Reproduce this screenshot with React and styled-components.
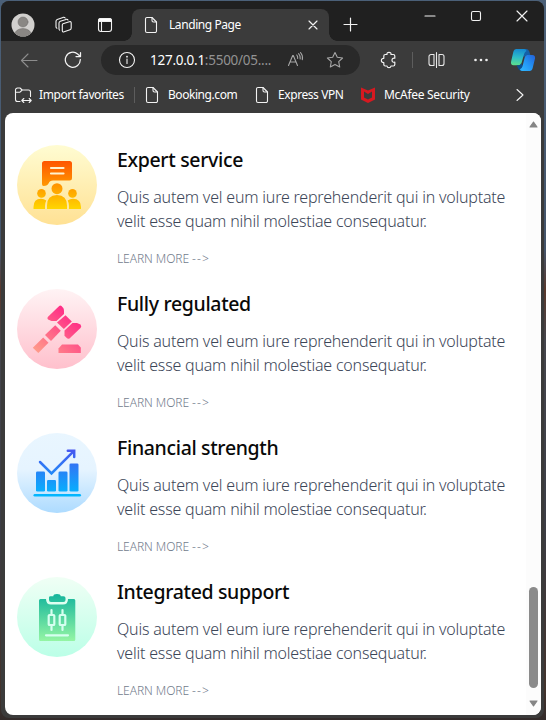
import React from "react";
import styled, { createGlobalStyle } from "styled-components";

const GlobalStyle = createGlobalStyle`
  *, *::before, *::after { box-sizing: border-box; }
  html, body { margin: 0; height: 100%; overflow: hidden; }
  body { font-family: "Noto Sans", "Open Sans", sans-serif; font-variant-ligatures: none; }
  h2, p { margin: 0; }
`;

const Desktop = styled.div`
  width: 546px;
  height: 720px;
  padding: 1px 2px 2px 1px;
  background: linear-gradient(180deg, #4b6078 0, #44546a 250px, #59382c 290px, #45454c 340px, #3c3d45 520px, #43332d 690px, #332b2a 720px);
`;

const Window = styled.div`
  height: 717px;
  display: flex;
  flex-direction: column;
  padding: 0 3px 3px 4px;
  border-radius: 8px;
  background: #3b3b3b;
  overflow: hidden;
`;

const TabStrip = styled.header`
  display: flex;
  flex: none;
  height: 40px;
  margin: 0 -3px 0 -4px;
  background: #202020;
`;

const Slot = styled.span`
  display: flex;
  flex: none;
  align-items: center;
  justify-content: center;
  width: ${(p) => p.$w}px;
  height: ${(p) => p.$h || 30}px;
  margin-left: ${(p) => p.$gap || 0}px;
  margin-top: ${(p) => p.$top || 0}px;
`;

const Tab = styled.div`
  position: relative;
  display: flex;
  align-items: center;
  width: 197px;
  height: 32px;
  margin: 8px 0 0 14px;
  padding: 0 11px 0 12px;
  border-radius: 8px 8px 0 0;
  background: #3b3b3b;
  &::before, &::after {
    content: "";
    position: absolute;
    bottom: 0;
    width: 8px;
    height: 8px;
  }
  &::before { left: -8px; background: radial-gradient(circle at 0 0, #202020 7.5px, #3b3b3b 8px); }
  &::after { right: -8px; background: radial-gradient(circle at 100% 0, #202020 7.5px, #3b3b3b 8px); }
`;

const Label = styled.span`
  flex: none;
  width: ${(p) => p.$w}px;
  margin-left: ${(p) => p.$gap}px;
  color: #fff;
  font-size: 12px;
  line-height: 16px;
  letter-spacing: ${(p) => p.$track ?? -0.42}px;
  white-space: nowrap;
`;

const Toolbar = styled.nav`
  display: flex;
  flex: none;
  align-items: center;
  height: 38px;
  margin: 0 -3px 0 -4px;
`;

const AddressBar = styled.div`
  display: flex;
  align-items: center;
  flex: none;
  width: 259px;
  height: 30px;
  margin-left: 19px;
  border-radius: 15px;
  background: #292929;
`;

const Url = styled.span`
  width: 122px;
  margin-left: 14px;
  font-size: 13.5px;
  line-height: 20px;
  letter-spacing: -0.26px;
  white-space: nowrap;
  color: #929292;
  b { color: #fff; font-weight: 400; }
`;

const Divider = styled.i`
  flex: none;
  width: 1px;
  height: 16px;
  margin-left: ${(p) => p.$gap}px;
  background: #5d5d5d;
`;

const Favorites = styled(Toolbar)`
  height: 34px;
  padding-bottom: 3px;
  padding-left: 13px;
`;

const Viewport = styled.main`
  display: flex;
  flex: 1;
  min-height: 0;
  border-radius: 8px;
  background: #fff;
  overflow: hidden;
`;

const Features = styled.section`
  flex: 1;
  padding: 32px 0 0 12px;
`;

const Feature = styled.article`
  display: flex;
  gap: 20px;
  height: 144px;
`;

const Badge = styled.div`
  flex: none;
  width: 80px;
  height: 80px;
  border-radius: 50%;
  background: linear-gradient(${(p) => p.$tint});
  svg { display: block; }
`;

const Title = styled.h2`
  font-size: 19.5px;
  font-weight: 500;
  line-height: 30px;
  letter-spacing: -0.34px;
  color: #090909;
`;

const Body = styled.p`
  margin-top: 10px;
  font-size: 16px;
  font-weight: 300;
  line-height: 24px;
  letter-spacing: -0.2px;
  white-space: nowrap;
  color: #3c4658;
`;

const More = styled.a`
  display: block;
  margin-top: 17px;
  font-size: 12px;
  font-weight: 300;
  line-height: 18px;
  letter-spacing: -0.07px;
  color: #727c8c;
`;

const Arrow = styled.span`
  letter-spacing: 1.1px;
`;

const Scrollbar = styled.aside`
  display: flex;
  flex-direction: column;
  align-items: center;
  flex: none;
  width: 15px;
  padding: 8px 0 8px;
  background: #fcfcfc;
`;

const Thumb = styled.div`
  width: 9px;
  height: 101px;
  margin: auto 0 12px;
  border-radius: 5px;
  background: #8b8b8b;
`;

const Svg = ({ w, h, children, stroke = "#f2f2f2", sw = 1.1, ...rest }) => (
  <svg width={w} height={h} viewBox={`0 0 ${w} ${h}`} fill="none" stroke={stroke} strokeWidth={sw} strokeLinecap="round" strokeLinejoin="round" {...rest}>
    {children}
  </svg>
);

const Avatar = () => (
  <Svg w={24} h={24} stroke="none">
    <clipPath id="face"><circle cx="12" cy="12" r="11.5" /></clipPath>
    <g clipPath="url(#face)">
      <rect width="24" height="24" fill="#d2d0ce" />
      <circle cx="12" cy="9" r="5" fill="#8a8784" stroke="#6f6c6a" strokeWidth=".5" />
      <ellipse cx="12" cy="21" rx="8" ry="5.5" fill="#8a8784" stroke="#6f6c6a" strokeWidth=".5" />
    </g>
  </Svg>
);

const Workspaces = () => (
  <Svg w={18} h={18}>
    <path d="M8 7.7 14.3 5.8Q16.2 5.2 16.2 7V12Q16.2 13.4 15 13.8L9.2 15.8Q7.3 16.4 7.3 14.6V9Q7.3 8 8 7.7Z" />
    <path d="M4.6 14.1Q4 13.7 4 12.7V7.1Q4 5.8 5.3 5.3L11 3.4Q12.4 3 13 4M1.9 12.2Q1 11.8 1 10.8V5.2Q1 3.9 2.2 3.4L8 1.4Q9.5 1 10.2 2" />
  </Svg>
);

const TabActions = () => (
  <Svg w={16} h={16}>
    <path d="M1.500 4.500V3.500A2 2 0 0 1 3.500 1.500h9A2 2 0 0 1 14.500 3.500V4.500Z" fill="#fff" />
    <rect x="1.500" y="1.500" width="13" height="13" rx="2.500" />
    <path d="M4.500 5v9" />
  </Svg>
);

const Page = () => (
  <Svg w={14} h={18}>
    <path d="M3 1.5h5L12.500 6v9A1.500 1.500 0 0 1 11 16.500H3A1.500 1.500 0 0 1 1.500 15V3A1.500 1.500 0 0 1 3 1.500Z" />
    <path d="M8 1.500V4.500A1.500 1.500 0 0 0 9.500 6h3" />
  </Svg>
);

const Cross = ({ size }) => (
  <Svg w={size} h={size} sw={1.15}><path d={`M1 1 ${size - 1} ${size - 1}M${size - 1} 1 1 ${size - 1}`} /></Svg>
);

const Plus = () => <Svg w={15} h={15} sw={1.2}><path d="M7.500 1v13M1 7.500h13" /></Svg>;

const Back = () => <Svg w={18} h={16} stroke="#8c8c8c"><path d="M17 8.500H1.500M8 2 1.500 8.500 8 15" /></Svg>;

const Refresh = () => (
  <Svg w={18} h={18} sw={1.25}>
    <path d="M16.300 8.500A7.500 7.500 0 1 1 13.600 3L16.500 5.500M16.500 1.500v4h-4.500" />
  </Svg>
);

const Info = () => (
  <Svg w={18} h={18}>
    <circle cx="9" cy="9" r="7.500" />
    <path d="M9 8v4.500" />
    <circle cx="9" cy="5.700" r=".9" fill="#f2f2f2" stroke="none" />
  </Svg>
);

const ReadAloud = () => (
  <Svg w={18} h={18} stroke="#a6a6a6">
    <path d="M1.500 14.500 5.700 4.500h.6L10.500 14.500M3.200 11h5.600" />
    <path d="M9.800 4Q10.900 5.500 10.700 7.500M11.600 2.700Q13.700 5 13.200 8M13.500 1.500Q16.200 4.700 15.300 8.700" />
  </Svg>
);

const Star = () => (
  <Svg w={18} h={18} stroke="#a6a6a6">
    <path d="M9 1.500 11.300 6.300 16.600 7 12.700 10.700 13.700 16 9 13.400 4.300 16 5.300 10.700 1.400 7 6.700 6.300Z" />
  </Svg>
);

const Puzzle = () => (
  <Svg w={18} h={18} sw={1.2}>
    <path d="M5.300 3.500H7C6.700 2 7.500 1.300 9 1.300S11.300 2 11 3.500H13.300A1.500 1.500 0 0 1 14.800 5V7.200C13 6.900 12 7.700 12 9.200S13 11.500 14.800 11.200V13.500A1.500 1.500 0 0 1 13.300 15H11C10.800 16.200 10.200 16.700 9 16.700S7.200 16.200 7 15H5.300A1.500 1.500 0 0 1 3.800 13.500V11.500C2.200 11.600 1.400 10.700 1.400 9.400S2.200 7.200 3.800 7.300V5A1.500 1.500 0 0 1 5.300 3.500Z" />
  </Svg>
);

const Split = () => (
  <Svg w={17} h={18}>
    <path d="M8.500 1.500v15M6 3.500H3A2 2 0 0 0 1 5.500v7A2 2 0 0 0 3 14.500H6V3.500M11 3.500H14A2 2 0 0 1 16 5.500v7A2 2 0 0 1 14 14.500H11V3.500" strokeOpacity=".95" />
  </Svg>
);

const Dots = () => (
  <Svg w={16} h={4} stroke="none">
    {[2.500, 8, 13.500].map((x) => <circle key={x} cx={x} cy="2" r="1.300" fill="#eee" />)}
  </Svg>
);

const Copilot = () => (
  <Svg w={26} h={24} stroke="none">
    <defs>
      <linearGradient id="cpA" x1=".3" y1="0" x2=".2" y2="1"><stop offset="0" stopColor="#168bd0" /><stop offset=".5" stopColor="#2dbcc8" /><stop offset="1" stopColor="#5de08c" /></linearGradient>
      <linearGradient id="cpB" x1="1" y1="0" x2="0" y2="1"><stop offset="0" stopColor="#2460d8" /><stop offset=".5" stopColor="#2394f4" /><stop offset="1" stopColor="#31baff" /></linearGradient>
    </defs>
    <path d="M12 1h4.500q2 0 2.800 2.500L20.500 7.500H16.500q-2 0-2.600 2L12 5Z" fill="#1460a8" />
    <path d="M6.500 1H14q2 0 2.500 2-1.600.4-2.300 2.800L11.500 15q-.6 2.200-2.700 2.200H3.500Q.4 17.200 1.100 13.500L3.300 4Q4 1 6.500 1Z" fill="url(#cpA)" />
    <path d="M6.500 17.200h2.300q1.500 0 2.300-2l1.900 2.500L12 23q-3 0-4-3Z" fill="#0b4f90" />
    <path d="M17.200 7h5Q25.600 7 25 10.500L22.700 20Q22 23 19.500 23H12q-1.700 0-2-1.700 1.800-.5 2.500-3l2.200-8.800Q15.200 7 17.200 7Z" fill="url(#cpB)" />
  </Svg>
);

const ImportFolder = () => (
  <Svg w={18} h={18}>
    <path d="M6 15.500H3.500A2 2 0 0 1 1.500 13.500V4A2 2 0 0 1 3.500 2H6L8.200 4H14.500A2 2 0 0 1 16.500 6v4.500M1.500 6.200H6L8.200 4" />
    <path d="M8 14.500h9M9.800 12.500l-2 2 2 2M15.200 12.500l2 2-2 2" />
  </Svg>
);

const Shield = () => (
  <Svg w={16} h={18} stroke="none">
    <path d="M1 1.500 8 4.500 15 1.500V13.500L8 17 1 13.500Z" fill="#d61920" />
    <path d="M4 5.500 8 8 12 5.500V11.500L8 13.600 4 11.500Z" fill="#3b3b3b" />
  </Svg>
);

const Grad = ({ id, from, to, x1 = 0, y1 = 16, x2 = 0, y2 = 64 }) => (
  <linearGradient id={id} gradientUnits="userSpaceOnUse" x1={x1} y1={y1} x2={x2} y2={y2}>
    <stop offset="0" stopColor={from} />
    <stop offset="1" stopColor={to} />
  </linearGradient>
);

const ExpertArt = () => (
  <Svg w={80} h={80} stroke="none">
    <Grad id="orange" from="#ff5500" to="#ffd600" />
    <g fill="url(#orange)">
      <path d="M27.500 16H52.500Q55 16 55 18.500V33Q55 35.500 52.500 35.500H36Q32.600 35.500 31.800 38 30.700 41 26.500 41Q25 41 25 39V18.500Q25 16 27.500 16Z" />
      <circle cx="40" cy="43.700" r="5.500" />
      <circle cx="24.500" cy="48.400" r="4.300" />
      <circle cx="55.500" cy="48.400" r="4.300" />
      <path d="M30 64V60.500Q30 50 40 50T50 60.500V64ZM16.500 64V62Q16.500 53.800 24 53.800 27 53.800 29.300 55.500 28 58 28 61V64ZM52 64V61Q52 58 50.700 55.500 53 53.800 56 53.800 64 54 64 62V64Z" />
    </g>
    <path d="M34 23h12.500M34 28.500h12.500" stroke="#fff2cf" strokeWidth="2.200" />
  </Svg>
);

const GavelArt = () => (
  <Svg w={80} h={80} stroke="none">
    <Grad id="rose" x1={18} y1={62} x2={52} y2={24} from="#ff9c8a" to="#ff2d86" />
    <g fill="url(#rose)">
      <path d="M30.800 28 42.200 17Q43.300 16 44.500 17L46.300 19Q47 20 47 22V25L39.500 32H34.500L31 30.500Q29.800 29 30.800 28Z" />
      <path d="M48.500 26.200 54.800 32.600 46.800 40 40 33.500Z" />
      <path d="M55.500 34H60L63.500 35.500Q65 37.500 63.500 39L52.500 49.500Q51 50.300 49.500 48.800L47.500 46.800V41.500Z" />
      <path d="M38.200 36.200 43.800 41.800 34 52 28 46Z" />
      <path d="M26.200 48.500 31.500 53.800 21.300 64 15.800 58.700Z" />
      <path d="M45 55.500H61L63.800 58.500V64H41.500V59.500Z" />
    </g>
  </Svg>
);

const ChartArt = () => (
  <Svg w={80} h={80} stroke="none">
    <Grad id="azure" from="#4855ef" to="#00baff" />
    <g fill="url(#azure)">
      <rect x="19" y="38.500" width="9" height="20" rx="1.300" />
      <rect x="30" y="47" width="9" height="11.500" rx="1.300" />
      <rect x="41.500" y="38.500" width="9" height="20" rx="1.300" />
      <rect x="52.500" y="30.500" width="9" height="28" rx="1.300" />
      <rect x="16.500" y="61" width="47.500" height="2.600" rx="1.300" />
    </g>
    <path d="M23 29 34.500 40.500 56.500 18.300M50.800 17.700H57.200V24" stroke="url(#azure)" strokeWidth="2.500" strokeLinejoin="miter" />
  </Svg>
);

const ClipboardArt = () => (
  <Svg w={80} h={80} stroke="none">
    <Grad id="mint" from="#11b49c" to="#94f5a4" />
    <g fill="url(#mint)">
      <path d="M22 23.500Q22 22 23.500 22H29Q29 27.500 34 27.500H46Q51 27.500 51 22H57Q58.300 22 58.300 23.500V62.500Q58.300 64 57 64H23.500Q22 64 22 62.500Z" />
      <path d="M32 20.500Q32 19.300 33.500 19.300H36.300Q36.300 17 40 17T43.700 19.300H46.500Q48.500 19.300 48.500 21V23Q48.500 25 46.500 25H34Q32 25 32 23Z" />
    </g>
    <g stroke="#d6fff0" strokeWidth="2.200">
      <path d="M34.500 33v4.500M34.500 49v4M45.500 33v4.500M45.500 49v4" />
      <rect x="31.700" y="38" width="5.600" height="10" rx=".8" />
      <rect x="42.700" y="38" width="5.600" height="10" rx=".8" />
      <path d="M29 58.300H51" />
    </g>
  </Svg>
);

const features = [
  { title: "Expert service", tint: "#fffcd2, #ffe194", Art: ExpertArt },
  { title: "Fully regulated", tint: "#fff3f4, #ffc0cc", Art: GavelArt },
  { title: "Financial strength", tint: "#e9f6ff 0%, #e6f4ff 45%, #addbff 100%", Art: ChartArt },
  { title: "Integrated support", tint: "#f0fff5, #bbffe7", Art: ClipboardArt },
];

export default function App() {
  return (
    <Desktop>
      <GlobalStyle />
      <Window>
        <TabStrip>
          <Slot $w={24} $h={24} $gap={10} $top={12}><Avatar /></Slot>
          <Slot $w={18} $h={18} $gap={20} $top={15}><Workspaces /></Slot>
          <Slot $w={16} $h={16} $gap={24} $top={16}><TabActions /></Slot>
          <Slot $w={5} />
          <Tab>
            <Page />
            <Label $w={132} $gap={11}>Landing Page</Label>
            <Slot $w={10} $gap={7}><Cross size={10} /></Slot>
          </Tab>
          <Slot $w={15} $h={15} $gap={14} $top={16}><Plus /></Slot>
          <Slot $w={46} $gap={49}><Svg w={12} h={2}><path d="M1 1h10" /></Svg></Slot>
          <Slot $w={46}><Svg w={12} h={12}><rect x="1.500" y="1.500" width="9" height="9" rx="1.500" /></Svg></Slot>
          <Slot $w={46}><Cross size={12} /></Slot>
        </TabStrip>
        <Toolbar>
          <Slot $w={18} $gap={19}><Back /></Slot>
          <Slot $w={18} $gap={26}><Refresh /></Slot>
          <AddressBar>
            <Slot $w={18} $gap={17}><Info /></Slot>
            <Url><b>127.0.0.1</b>:5500/05....</Url>
            <Slot $w={18} $gap={15}><ReadAloud /></Slot>
            <Slot $w={18} $gap={21}><Star /></Slot>
          </AddressBar>
          <Slot $w={18} $gap={20}><Puzzle /></Slot>
          <Divider $gap={14} />
          <Slot $w={17} $gap={15}><Split /></Slot>
          <Slot $w={16} $gap={28}><Dots /></Slot>
          <Slot $w={26} $gap={21}><Copilot /></Slot>
        </Toolbar>
        <Favorites>
          <ImportFolder />
          <Label $w={86} $gap={7}>Import favorites</Label>
          <Divider $gap={9} />
          <Slot $w={14} $gap={10}><Page /></Slot>
          <Label $w={70} $gap={9} $track={-0.44}>Booking.com</Label>
          <Slot $w={14} $gap={17}><Page /></Slot>
          <Label $w={66} $gap={9}>Express VPN</Label>
          <Slot $w={16} $gap={16}><Shield /></Slot>
          <Label $w={86} $gap={8} $track={-0.3}>McAfee Security</Label>
          <Slot $w={8} $gap={46}><Svg w={8} h={14}><path d="M1 1.500 7 7 1 12.500" /></Svg></Slot>
        </Favorites>
        <Viewport>
          <Features>
            {features.map(({ title, tint, Art }) => (
              <Feature key={title}>
                <Badge $tint={tint}><Art /></Badge>
                <div>
                  <Title>{title}</Title>
                  <Body>Quis autem vel eum iure reprehenderit qui in voluptate<br />velit esse quam nihil molestiae consequatur.</Body>
                  <More>LEARN MORE <Arrow>--&gt;</Arrow></More>
                </div>
              </Feature>
            ))}
          </Features>
          <Scrollbar>
            <Svg w={9} h={7} stroke="#858585" fill="#858585"><path d="M4.500 1 8 6H1Z" /></Svg>
            <Thumb />
            <Svg w={9} h={7} stroke="#858585" fill="#858585"><path d="M4.500 6 8 1H1Z" /></Svg>
          </Scrollbar>
        </Viewport>
      </Window>
    </Desktop>
  );
}
